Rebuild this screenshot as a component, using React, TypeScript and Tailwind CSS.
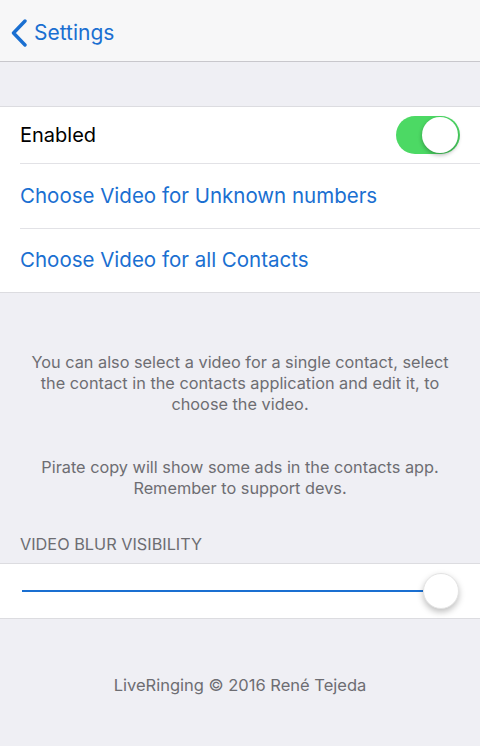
export default function App() {
  return (
    <div className="min-h-[746px] w-[480px] bg-[#efeff4] font-['Inter','Noto_Sans',sans-serif]">
      <div className="flex h-[62px] items-center border-b border-[#c8c7cc] bg-[#f7f7f8] pt-[4px]">
        <svg width="18" height="28" viewBox="0 0 18 28" className="ml-[10px]">
          <path d="M15 2 L3.5 14 L15 26" fill="none" stroke="#1a6fd1" strokeWidth="3.4" strokeLinecap="round" strokeLinejoin="round" />
        </svg>
        <span className="ml-[6px] text-[21px] text-[#1a6fd1]">Settings</span>
      </div>

      <div className="mt-[44px] border-y border-[#dcdce0] bg-white">
        <div className="flex h-[56px] items-center justify-between pl-[20px] pr-[20px]">
          <span className="text-[20px] text-black">Enabled</span>
          <div className="relative h-[38px] w-[64px] rounded-full bg-[#4cd964]">
            <div className="absolute right-[2px] top-[1px] h-[36px] w-[36px] rounded-full bg-white shadow-[0_2px_4px_rgba(0,0,0,0.3)]" />
          </div>
        </div>
        <div className="ml-[20px] border-t border-[#e2e2e6]" />
        <div className="flex h-[64px] items-center pl-[20px]">
          <span className="text-[20.5px] text-[#1a6fd1]">Choose Video for Unknown numbers</span>
        </div>
        <div className="ml-[20px] border-t border-[#e2e2e6]" />
        <div className="flex h-[63px] items-center pl-[20px]">
          <span className="text-[20.5px] text-[#1a6fd1]">Choose Video for all Contacts</span>
        </div>
      </div>

      <p className="mt-[59px] px-[26px] text-center text-[16.3px] leading-[21px] text-[#6d6d72]">
        You can also select a video for a single contact, select the contact in the contacts application and edit it, to choose the video.
      </p>
      <p className="mt-[42px] px-[26px] text-center text-[16.3px] leading-[21px] text-[#6d6d72]">
        Pirate copy will show some ads in the contacts app. Remember to support devs.
      </p>

      <div className="mt-[35px] px-[20px] text-[16.3px] leading-[21px] text-[#6d6d72]">VIDEO BLUR VISIBILITY</div>

      <div className="mt-[8px] flex h-[56px] items-center border-y border-[#dcdce0] bg-white pl-[22px] pr-[21px]">
        <div className="h-[2px] flex-1 bg-[#1a6fd1]" />
        <div className="h-[36px] w-[36px] rounded-full border border-[#e4e4e4] bg-white shadow-[0_3px_6px_rgba(0,0,0,0.25)]" />
      </div>

      <div className="mt-[56px] text-center text-[16.5px] leading-[21px] text-[#6d6d72]">LiveRinging © 2016 René Tejeda</div>
    </div>
  )
}
